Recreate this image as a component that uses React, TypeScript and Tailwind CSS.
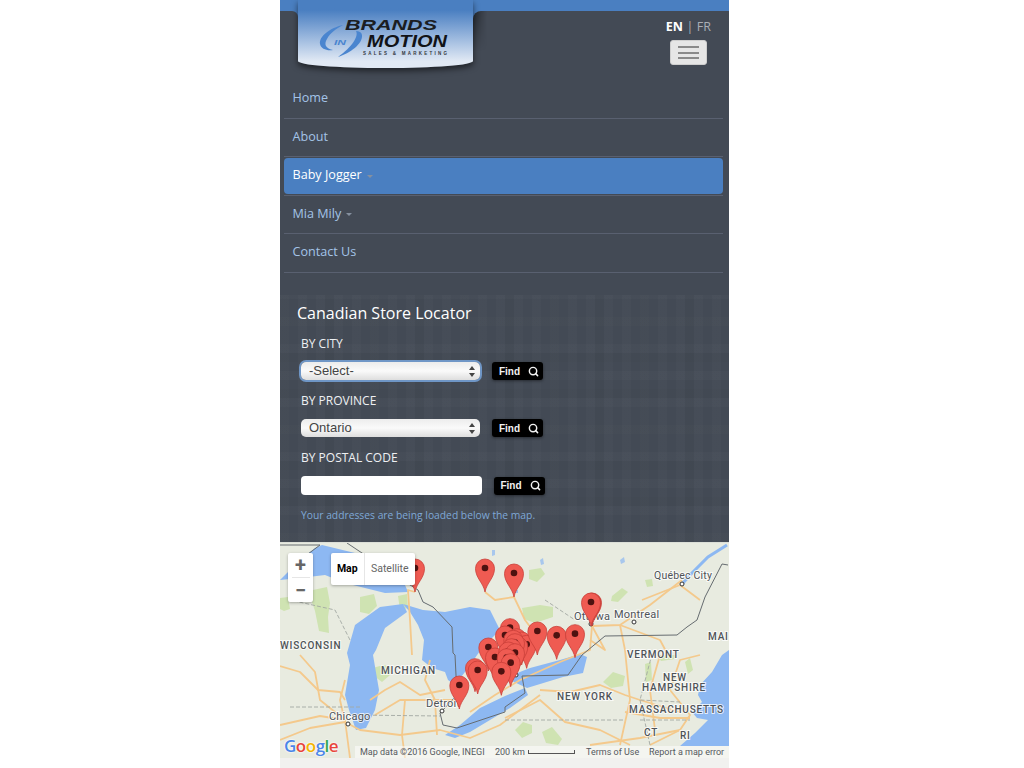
import React from "react";
import { Search } from "lucide-react";

const heads: [number, number][] = [
  [180, 50], [165, 72], [75, 170], [115, 108], [200, 80], [215, 90], [230, 100], [135, 138], [190, 85], [205, 105], [175, 130], [195, 95], [185, 110], [175, 120], [195, 125], [170, 140], [182, 155], [154, 181], [83, 177], [28, 222], [262, 60], [320, 73], [375, 68],
];

function Pin({ x, y, dark }: { x: number; y: number; dark?: boolean }) {
  return (
    <g transform={`translate(${x} ${y})`}>
      <path
        d="M0 0C-1.500-9-9.500-14-9.500-23.500A9.500 9.500 0 1 1 9.500-23.500C9.500-14 1.500-9 0 0Z"
        fill={dark ? "#d8473f" : "#ef5b52"}
        stroke="#c93f38"
        strokeWidth="0.8"
      />
      <circle cx="0" cy="-24" r="3.300" fill="#4d1210" />
    </g>
  );
}

const roads = [
  "M280 666L300 672L318 690L340 692L345 700",
  "M300 655L315 672L320 700L345 720",
  "M280 740L310 728L345 722L360 730L400 735L440 730L470 738L500 725L540 695",
  "M345 720L350 758",
  "M345 722L340 700L345 680",
  "M280 725L320 716L345 720",
  "M375 715L400 700L430 700L460 700",
  "M370 700L385 690L400 682L420 695L445 690",
  "M405 700L402 735L405 758",
  "M430 660L425 680L435 700L437 735",
  "M412 655L410 620L408 590L415 592",
  "M470 712L495 695L520 680L560 662L590 650L592 626",
  "M485 592L495 600L514 597L525 620L540 640",
  "M592 626L620 625L650 605L682 580",
  "M592 626L605 650L590 640",
  "M620 625L660 640L668 655M642 600L680 585L700 600",
  "M620 625L625 650L630 700L620 745",
  "M540 690L570 692L600 685L625 695L640 700L680 712",
  "M505 718L540 700L565 722L600 730L630 745",
  "M650 745L680 730L690 715L670 690L680 660L700 655",
  "M625 712L660 718L690 718",
  "M590 745L640 738L680 730",
  "M660 655L650 690L655 730",
];

const halo = { paintOrder: "stroke", stroke: "#ffffff", strokeWidth: 2, strokeOpacity: 0.75 } as const;

function Label({ x, y, size = 10, spacing = 0.8, weight = 500, children }: { x: number; y: number; size?: number; spacing?: number; weight?: number; children: React.ReactNode }) {
  return (
    <text x={x} y={y} fontSize={size} letterSpacing={spacing} fontWeight={weight} fontFamily="Roboto, sans-serif" fill="#4f5358" style={halo}>
      {children}
    </text>
  );
}

function MapArt() {
  return (
    <svg viewBox="280 543 449 215" className="block w-full h-full">
      <rect x="280" y="543" width="449" height="215" fill="#e8ebe0" />
      <g fill="#cfe3b2">
        <path d="M280 598l8-1 2 12-6 2-4-2z" />
        <path d="M313 590l14-3 3 16-2 14 1 16-10-2-4-20-4-12z" />
        <path d="M360 597l14-3 3 12-8 8-9-2z" />
        <path d="M398 596l9-2 1 14-8 2z" />
        <path d="M373 668l10-3 10 2-3 8-8 7-8-6z" />
        <path d="M522 608l18-3 13 2 0 10-18 6-11-4z" />
        <path d="M529 570l12-2 4 6-8 8-8-3z" />
        <path d="M612 596l10-8 6 4-10 10-7-1z" />
        <path d="M645 580l7-1 1 7-6 1z" />
        <path d="M515 730l8-8 9 3 0 8-10 5z" />
        <path d="M542 732l10-5 10 12-4 6-12-2z" />
        <path d="M603 682l10-10 12 4-2 10-12 2z" />
        <path d="M645 664l6-2 1 18-6 2z" />
        <path d="M657 655l20 0-2 4-14 2z" />
        <path d="M685 662l5-4 3 12-5 4z" />
      </g>
      <g fill="#8db8f2">
        <path d="M280 580L300 560L315 548L322 545L355 553L405 585L408 592L385 593L345 583L325 575L300 578Z" />
        <path d="M380 607L403 604L407 612L385 628L376 650L373 655L379 690L375 710L366 728L356 730L349 710L345 695L350 665L347 653L355 625Z" />
        <path d="M403 604L423 610L445 612L470 607L490 610L500 630L482 648L468 668L455 685L448 680L445 672L432 668L422 660L424 640L418 625L410 612Z" />
        <path d="M445 735L460 725L480 708L505 696L525 688L528 695L510 708L490 720L470 732L455 738Z" />
        <path d="M505 678L530 668L560 660L580 654L587 657L583 673L563 677L527 688Z" />
        <path d="M729 650L722 655L712 672L700 685L698 695L702 702L692 712L697 718L708 720L695 733L680 746L729 746Z" />
        <path d="M620 560l4-3 1 5-4 2zM540 560l3-2 1 6-3 1zM513 590l5 0 0 3-5 0zM492 550l3 0 0 5-3 1z" opacity="0.7" />
      </g>
      <path d="M727 545L708 557L692 573L683 583" fill="none" stroke="#8db8f2" strokeWidth="3" />
      <g fill="none" stroke="#f4c98c" strokeWidth="1.800" strokeLinejoin="round">
        {roads.map((d, i) => (
          <path key={i} d={d} />
        ))}
      </g>
      <g fill="none" stroke="#a3a8a3" strokeWidth="0.900" strokeDasharray="4 2">
        <path d="M290 707L360 707" />
        <path d="M355 715L440 716" />
        <path d="M505 720L625 720" />
        <path d="M640 700L650 745" />
        <path d="M640 720L690 720" />
        <path d="M652 654L640 700L680 702" />
        <path d="M350 640L335 610L290 600" />
        <path d="M545 600L575 620" />
      </g>
      <path
        d="M728 565L722 564L705 597L697 620L687 627L677 635L605 636L582 655L568 675L522 676L525 693L505 707L505 712L457 728L443 725L440 713L457 695L455 655L453 653L452 627L433 607L423 602L418 590L407 583L347 543M280 545L320 545L300 560"
        fill="none"
        stroke="#666c70"
        strokeWidth="1"
      />
      <g>
        <Label x={280} y={649}>WISCONSIN</Label>
        <Label x={381} y={674}>MICHIGAN</Label>
        <Label x={329} y={720} size={11} spacing={0.2} weight={400}>Chicago</Label>
        <Label x={426} y={707} size={11} spacing={0.2} weight={400}>Detroit</Label>
        <Label x={557} y={700}>NEW YORK</Label>
        <Label x={663} y={681}>NEW</Label>
        <Label x={642} y={691}>HAMPSHIRE</Label>
        <Label x={629} y={713}>MASSACHUSETTS</Label>
        <Label x={644} y={736}>CT</Label>
        <Label x={680} y={739}>RI</Label>
        <Label x={627} y={658}>VERMONT</Label>
        <Label x={708} y={640}>MAI</Label>
        <Label x={654} y={579} size={10.500} spacing={0.2} weight={400}>Québec City</Label>
        <Label x={614} y={618} size={11} spacing={0.2} weight={400}>Montreal</Label>
        <Label x={574} y={620} size={11} spacing={0.2} weight={400}>Ottawa</Label>
      </g>
      <g fill="#fff" stroke="#333" strokeWidth="1">
        <circle cx="591" cy="624" r="2" />
        <circle cx="634" cy="622" r="2" />
        <circle cx="682" cy="584" r="2" />
        <circle cx="348" cy="724" r="2" />
        <circle cx="442" cy="711" r="2" />
        <circle cx="516" cy="675" r="2" />
      </g>
      <Pin x={415} y={592} />
      <Pin x={485} y={592} />
      <Pin x={514} y={597} />
      <Pin x={592} y={626} dark />
      <Pin x={591} y={626} />
      {heads.map(([hx, hy], i) => (
        <Pin key={i} x={450 + hx / 3} y={610 + hy / 3 + 25} />
      ))}
    </svg>
  );
}

function FindButton() {
  return (
    <button className="flex items-center justify-center gap-[8px] w-[51px] h-[18px] pl-[3px] rounded-[3px] bg-black text-[#f2f2f2] text-[10px] font-bold shadow-[0_1px_3px_rgba(0,0,0,0.45)] font-['Liberation_Sans',sans-serif]">
      Find
      <Search size={11} strokeWidth={3.2} />
    </button>
  );
}

function SelectBox({ value, focused }: { value: string; focused?: boolean }) {
  return (
    <div className={`relative w-[179px] h-[18px] rounded-[5px] ${focused ? "ring-[2px] ring-[#6f96c6]" : ""}`}>
      <select
        defaultValue={value}
        className="appearance-none block w-full h-full pl-[8px] rounded-[5px] bg-gradient-to-b from-[#ececec] via-[#fafafa] to-[#dedede] text-[#444] text-[13px] leading-[18px] font-['Liberation_Sans',sans-serif]"
      >
        <option>{value}</option>
      </select>
      <svg viewBox="0 0 6 11" className="absolute right-[5px] top-[4px] w-[6px] h-[11px]">
        <path d="M3 0L6 4H0ZM3 11L0 7H6Z" fill="#444" />
      </svg>
    </div>
  );
}

function NavItem({ label, active, caret }: { label: string; active?: boolean; caret?: boolean }) {
  return (
    <div className="h-[38.500px] pt-[0.5px] border-b border-[#596070]">
      <a className={`flex items-center gap-[5px] h-[36px] pl-[8.500px] rounded-[4px] text-[12.600px] ${active ? "bg-[#4a7fc1] text-white" : "text-[#a3c4e8]"}`}>
        {label}
        {caret && <span className="w-0 h-0 mt-[1px] border-x-[3.500px] border-t-[3.500px] border-x-transparent border-t-[#85909f]" />}
      </a>
    </div>
  );
}

export default function App() {
  return (
    <div className="h-[768px] overflow-hidden bg-white">
      <div className="ml-[280px] w-[449px] h-full flex flex-col bg-[#434a55] font-['Open_Sans',sans-serif]">
        <header className="flex h-[80px] shrink-0 bg-[linear-gradient(#4a7fc1_22px,#434a55_22px)]">
          <div className="w-[18px] mt-[11px] bg-[#434a55] rounded-tr-[6px]" />
          <div className="relative z-10 w-[175px] h-[68px] rounded-b-[87px_7px] bg-gradient-to-b from-[#4a7fc1] from-15% to-[#e1e9f4] to-90% shadow-[0_3px_6px_rgba(0,0,0,0.55)]">
            <svg viewBox="298 0 175 68" className="block w-full h-full">
              <path d="M343 25C330 28 319 36 320 44C321 49 327 51 333 50C325 48 324 44 327 39C330 33 336 29 343 25Z" fill="#4a85cf" />
              <path d="M338 57C350 53 363 44 362 35C361.500 32 359 31 356 31C359 36 352 47 338 57Z" fill="#4a85cf" />
              <text x="334" y="45" fontSize="8" fontStyle="italic" fontWeight="700" fill="#4a85cf" fontFamily="Liberation Sans, sans-serif" textLength="12" lengthAdjust="spacingAndGlyphs">IN</text>
              <text x="345" y="30" fontSize="14" fontStyle="italic" fontWeight="700" fill="#1b1d22" fontFamily="Liberation Sans, sans-serif" textLength="92" lengthAdjust="spacingAndGlyphs">BRANDS</text>
              <text x="367" y="47" fontSize="16" fontStyle="italic" fontWeight="700" fill="#111317" fontFamily="Liberation Sans, sans-serif" textLength="80" lengthAdjust="spacingAndGlyphs">MOTION</text>
              <text x="363" y="55" fontSize="4.500" fontWeight="700" fill="#33363c" fontFamily="Liberation Sans, sans-serif" textLength="84" lengthAdjust="spacing">SALES &amp; MARKETING</text>
            </svg>
          </div>
          <div className="relative flex-1 mt-[11px] bg-[#434a55] rounded-tl-[8px] flex flex-col items-end pr-[18px] pt-[6px]">
            <div className="absolute left-0 top-0 w-[14px] h-[40px] rounded-tl-[8px] bg-gradient-to-r from-black/45 to-transparent [mask-image:linear-gradient(black,transparent)]" />
            <div className="text-[12.500px] leading-[20px] text-[#a9aeb5]">
              <span className="font-bold text-white">EN</span>
              <span className="mx-[3.500px]">|</span>
              <span>FR</span>
            </div>
            <button className="mt-[3px] mr-[4px] w-[37px] h-[25px] flex flex-col items-center justify-center gap-[3.500px] bg-[#e6e6e6] rounded-[3px] border border-[#cfcfcf]">
              <span className="block w-[21px] h-[2px] bg-[#8a8a8a]" />
              <span className="block w-[21px] h-[2px] bg-[#8a8a8a]" />
              <span className="block w-[21px] h-[2px] bg-[#8a8a8a]" />
            </button>
          </div>
        </header>

        <nav className="ml-[4px] mr-[6px] shrink-0">
          <NavItem label="Home" />
          <NavItem label="About" />
          <NavItem label="Baby Jogger" active caret />
          <NavItem label="Mia Mily" caret />
          <NavItem label="Contact Us" />
        </nav>

        <section className="mt-[22.500px] h-[247px] shrink-0 pt-[7px] bg-[repeating-linear-gradient(90deg,rgba(255,255,255,0.014)_0_9px,transparent_9px_18px),repeating-linear-gradient(0deg,rgba(255,255,255,0.014)_0_9px,transparent_9px_27px),repeating-linear-gradient(90deg,rgba(0,0,0,0.02)_0_9px,transparent_9px_45px),repeating-linear-gradient(0deg,rgba(0,0,0,0.02)_0_9px,transparent_9px_36px)]">
          <h2 className="ml-[17px] h-[22px] text-[16px] leading-[22px] text-white">Canadian Store Locator</h2>
          <div className="ml-[21px]">
            <div className="mt-[11px] h-[18px] text-[12px] leading-[18px] text-[#eef0f3]">BY CITY</div>
            <div className="mt-[9px] flex items-center gap-[12px]">
              <SelectBox value="-Select-" focused />
              <FindButton />
            </div>
            <div className="mt-[12px] h-[18px] text-[12px] leading-[18px] text-[#eef0f3]">BY PROVINCE</div>
            <div className="mt-[9px] flex items-center gap-[12px]">
              <SelectBox value="Ontario" />
              <FindButton />
            </div>
            <div className="mt-[12px] h-[18px] text-[12px] leading-[18px] text-[#eef0f3]">BY POSTAL CODE</div>
            <div className="mt-[9px] flex items-center gap-[12px]">
              <input className="block w-[180.500px] h-[19px] rounded-[4px] bg-white" />
              <FindButton />
            </div>
            <p className="mt-[11px] h-[18px] text-[10.300px] leading-[18px] text-[#7fa8d6]">Your addresses are being loaded below the map.</p>
          </div>
        </section>

        <div className="relative h-[216px] shrink-0 border-t border-[#dcdfd8]">
          <MapArt />
          <div className="absolute left-[8px] top-[10px] w-[25px] h-[49px] bg-white rounded-[2px] shadow-[0_1px_3px_rgba(0,0,0,0.3)] flex flex-col items-center font-['Roboto',sans-serif] text-[#666]">
            <div className="flex-1 w-full flex items-center justify-center text-[20px] leading-none font-bold">+</div>
            <div className="w-[18px] h-px bg-[#e6e6e6]" />
            <div className="flex-1 w-full flex items-center justify-center text-[20px] leading-none font-bold">−</div>
          </div>
          <div className="absolute left-[51px] top-[10px] w-[84px] h-[32px] bg-white rounded-[2px] shadow-[0_1px_3px_rgba(0,0,0,0.3)] flex text-[10.500px] font-['Roboto',sans-serif]">
            <div className="w-[33.500px] flex items-center justify-center font-bold text-black border-r border-[#e6e6e6]">Map</div>
            <div className="flex-1 flex items-center justify-center text-[#666]">Satellite</div>
          </div>
          <div className="absolute left-[4px] bottom-[2px] h-[20px] text-[17px] leading-[20px] font-['Open_Sans',sans-serif] font-semibold tracking-[-0.5px] [text-shadow:0_0_2px_#fff,0_0_2px_#fff]">
            <span className="text-[#4a86e8]">G</span>
            <span className="text-[#e8453c]">o</span>
            <span className="text-[#f4b400]">o</span>
            <span className="text-[#4a86e8]">g</span>
            <span className="text-[#34a853]">l</span>
            <span className="text-[#e8453c]">e</span>
          </div>
          <div className="absolute left-[75px] right-0 bottom-0 h-[12px] bg-white/50 flex items-center text-[9px] leading-[12px] text-[#55595e] font-['Roboto',sans-serif] whitespace-nowrap">
            <span className="ml-[5px] w-[135px]">Map data ©2016 Google, INEGI</span>
            <span className="w-[33px]">200 km</span>
            <span className="block w-[47px] h-[4px] border-x border-b border-[#555]" />
            <span className="ml-[11px] w-[63px]">Terms of Use</span>
            <span>Report a map error</span>
          </div>
        </div>

        <div className="flex-1 bg-[#f1f1ef]" />
      </div>
    </div>
  );
}
